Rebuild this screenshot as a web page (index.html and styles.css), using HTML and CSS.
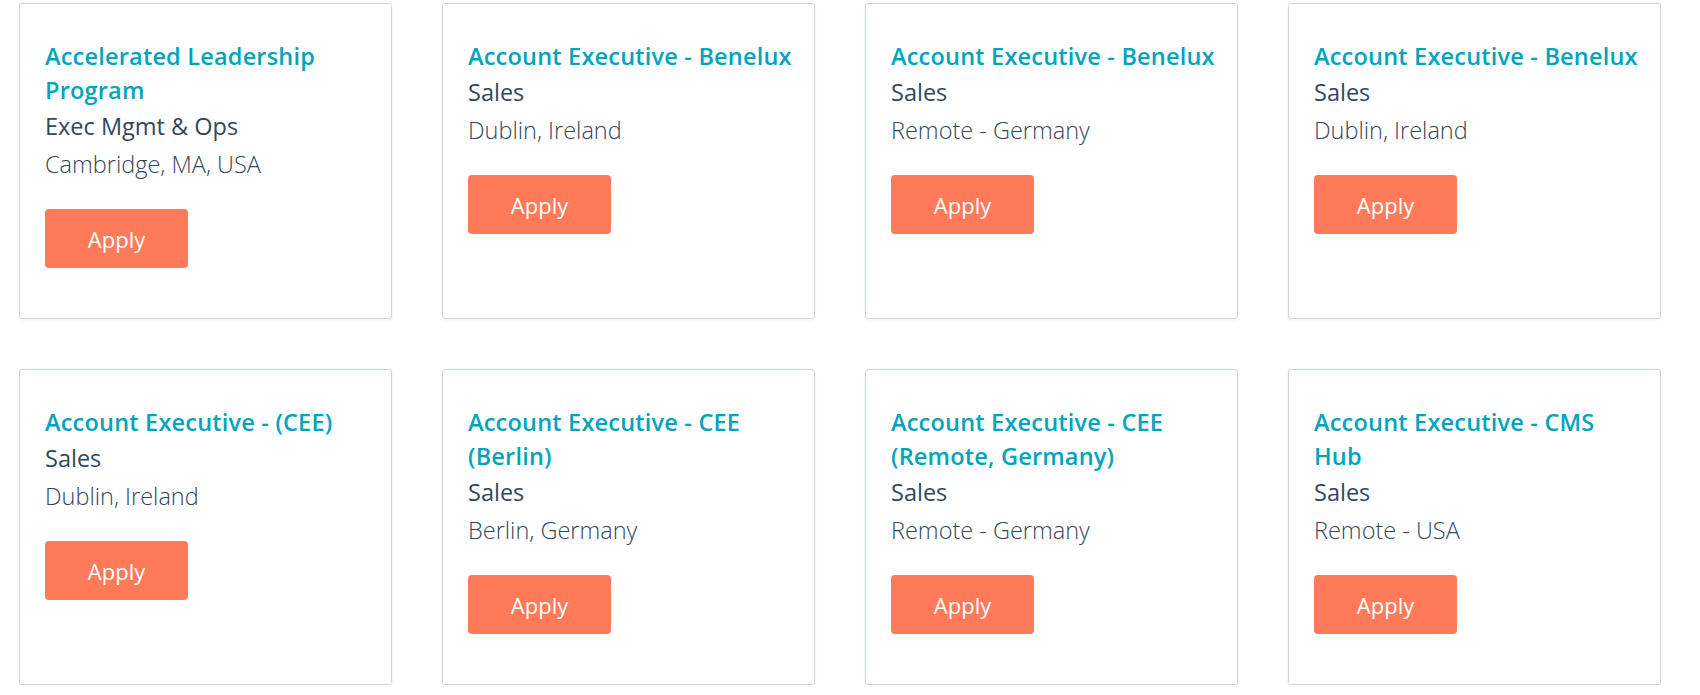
FILE: index.html
```html
<!DOCTYPE html>
<html>
<head>
    <title>Open Positions</title>
    <link rel="stylesheet" href="styles.css">
</head>
<body>
    <div class="jobs">
        <div class="job-card">
            <a class="job-title" href="#">Accelerated Leadership Program</a>
            <div class="job-dept">Exec Mgmt &amp; Ops</div>
            <div class="job-location">Cambridge, MA, USA</div>
            <a class="apply-btn" href="#">Apply</a>
        </div>
        <div class="job-card">
            <a class="job-title" href="#">Account Executive - Benelux</a>
            <div class="job-dept">Sales</div>
            <div class="job-location">Dublin, Ireland</div>
            <a class="apply-btn" href="#">Apply</a>
        </div>
        <div class="job-card">
            <a class="job-title" href="#">Account Executive - Benelux</a>
            <div class="job-dept">Sales</div>
            <div class="job-location">Remote - Germany</div>
            <a class="apply-btn" href="#">Apply</a>
        </div>
        <div class="job-card">
            <a class="job-title" href="#">Account Executive - Benelux</a>
            <div class="job-dept">Sales</div>
            <div class="job-location">Dublin, Ireland</div>
            <a class="apply-btn" href="#">Apply</a>
        </div>
        <div class="job-card">
            <a class="job-title" href="#">Account Executive - (CEE)</a>
            <div class="job-dept">Sales</div>
            <div class="job-location">Dublin, Ireland</div>
            <a class="apply-btn" href="#">Apply</a>
        </div>
        <div class="job-card">
            <a class="job-title" href="#">Account Executive - CEE (Berlin)</a>
            <div class="job-dept">Sales</div>
            <div class="job-location">Berlin, Germany</div>
            <a class="apply-btn" href="#">Apply</a>
        </div>
        <div class="job-card">
            <a class="job-title" href="#">Account Executive - CEE (Remote, Germany)</a>
            <div class="job-dept">Sales</div>
            <div class="job-location">Remote - Germany</div>
            <a class="apply-btn" href="#">Apply</a>
        </div>
        <div class="job-card">
            <a class="job-title" href="#">Account Executive - CMS Hub</a>
            <div class="job-dept">Sales</div>
            <div class="job-location">Remote - USA</div>
            <a class="apply-btn" href="#">Apply</a>
        </div>
    </div>
</body>
</html>
```

FILE: styles.css
```css
body {
    margin: 0;
    padding: 3px 0 0 19px;
    background: #ffffff;
    font-family: "Open Sans", Lato, sans-serif;
    color: #33475b;
}

.jobs {
    display: grid;
    grid-template-columns: repeat(4, 373px);
    column-gap: 50px;
    row-gap: 50px;
}

.job-card {
    box-sizing: border-box;
    height: 316px;
    padding: 35px 18px 0 25px;
    border: 1px solid #cbd6e2;
    border-radius: 3px;
    box-shadow: 0 1px 3px rgba(45, 62, 80, 0.08);
    display: flex;
    flex-direction: column;
    align-items: flex-start;
}

.job-title {
    font-size: 23.5px;
    line-height: 34px;
    font-weight: 600;
    letter-spacing: 0.2px;
    color: #00a4bd;
    text-decoration: none;
}

.job-dept {
    margin-top: 2px;
    font-size: 23.5px;
    line-height: 34px;
    font-weight: 500;
}

.job-location {
    margin-top: 4px;
    font-size: 23.5px;
    line-height: 34px;
    font-weight: 300;
}

.apply-btn {
    margin-top: 28px;
    width: 143px;
    height: 59px;
    display: flex;
    align-items: center;
    justify-content: center;
    background: #ff7a59;
    border-radius: 4px;
    color: #ffffff;
    font-size: 22px;
    text-decoration: none;
}
```
